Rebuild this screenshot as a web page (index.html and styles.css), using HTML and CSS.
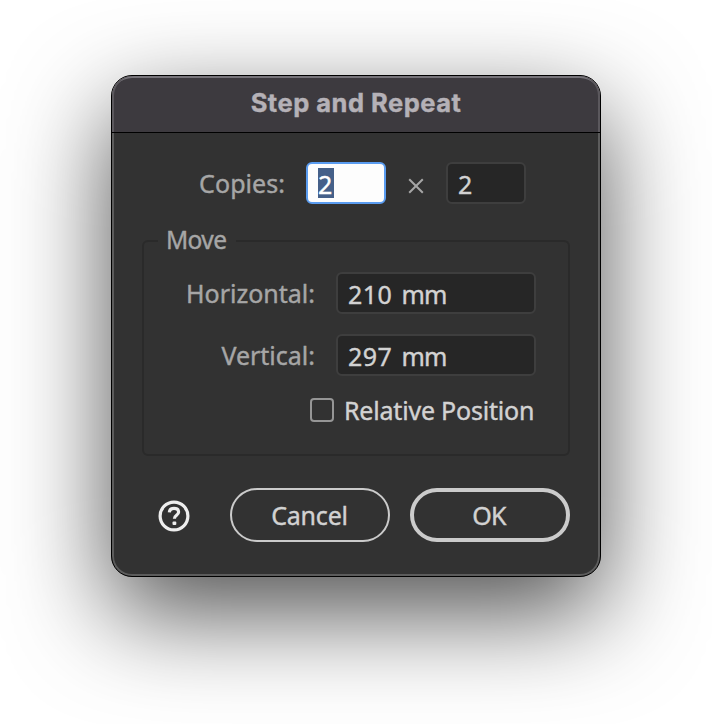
FILE: index.html
```html
<!DOCTYPE html>
<html lang="en">
<head>
<meta charset="utf-8">
<title>Step and Repeat</title>
<link rel="stylesheet" href="styles.css">
</head>
<body>
<main class="dialog">
  <header class="titlebar">Step and Repeat</header>
  <div class="content">
    <div class="copies">
      <span class="label label-copies">Copies:</span>
      <div class="field field-small focused"><span class="selection">2</span></div>
      <svg class="times" viewBox="0 0 16 16"><path d="M1.2 1.2 14.8 14.8M14.8 1.2 1.2 14.8"/></svg>
      <div class="field field-small">2</div>
    </div>
    <fieldset class="group">
      <legend class="legend">Move</legend>
      <div class="row">
        <span class="label label-horizontal">Horizontal:</span>
        <div class="field">210 <span class="unit">mm</span></div>
      </div>
      <div class="row">
        <span class="label label-vertical">Vertical:</span>
        <div class="field">297 <span class="unit">mm</span></div>
      </div>
      <div class="check-row">
        <span class="checkbox"></span>
        <span class="check-label">Relative Position</span>
      </div>
    </fieldset>
    <footer class="actions">
      <svg class="help" viewBox="0 0 32 32">
        <circle cx="16" cy="16" r="13.9"/>
        <path d="M11.3 12.4C11.5 9.7 13.3 8.4 16 8.4c2.8 0 4.6 1.3 4.6 3.7 0 3.3-4.2 3.1-4.2 6.6"/>
        <rect x="14.5" y="21.6" width="3.8" height="3.4" rx="1"/>
      </svg>
      <div class="button cancel">Cancel</div>
      <div class="button primary">OK</div>
    </footer>
  </div>
</main>
</body>
</html>
```

FILE: styles.css
```css
* { box-sizing: border-box; }

body {
  margin: 0;
  height: 724px;
  padding: 75px 0 0 111px;
  overflow: hidden;
  background: #fff;
  font: 25px/40px "Noto Sans", "Open Sans", sans-serif;
  color: #d2d2d2;
  -webkit-text-stroke: .4px;
}

.dialog {
  width: 490px;
  height: 502px;
  border: 1px solid #000;
  border-radius: 21px;
  background: #323232;
  box-shadow: inset 0 0 0 2px #5c5c5c, 0 36px 100px rgba(0, 0, 0, .69);
}

.titlebar {
  height: 57px;
  padding-top: 2px;
  border-bottom: 1px solid #000;
  border-radius: 20px 20px 0 0;
  background: #3d3a3f;
  box-shadow: inset 2px 0 #5b585d, inset -2px 0 #5b585d, inset 0 2px #77747a;
  color: #b5b1b7;
  font: 700 25.5px/50px Inter, sans-serif;
  letter-spacing: .5px;
  text-align: center;
}

.content { padding: 29px 30px 0; }

.copies {
  display: flex;
  align-items: center;
  height: 42px;
}

.label { text-align: right; color: #a6a6a6; }
.label-copies { width: 144px; margin-right: 20px; padding-right: 1px; letter-spacing: .05px; }
.label-horizontal, .label-vertical { padding: 1px 1px 0 0; line-height: 40px; }

.field {
  width: 200px;
  height: 42px;
  padding: 0 0 0 10px;
  border: 2px solid #3e3e3e;
  border-radius: 6px;
  background: #262626;
  letter-spacing: .4px;
  word-spacing: 2.5px;
}

.unit { letter-spacing: -1px; }

.field-small { width: 80px; }
.focused { border-color: #5a9cf0; background: #fdfdfd; }

.selection {
  display: block;
  width: 16px;
  height: 30px;
  margin-top: 4px;
  background: #456089;
  color: #fff;
  line-height: 32px;
}

.times {
  width: 16px;
  height: 16px;
  margin: 6px 22px 0;
  fill: none;
  stroke: #a6a6a6;
  stroke-width: 2;
}

.group {
  position: relative;
  height: 235px;
  margin: 17px 0 0;
  padding: 11px 32px 0 0;
  border: 2px solid #2a2a2a;
  border-radius: 6px;
}

.legend {
  height: 40px;
  margin-left: 14px;
  padding: 0 10px 0 8px;
  color: #a6a6a6;
  font-size: 24.5px;
  letter-spacing: -.6px;
  line-height: 38px;
}

.row {
  display: flex;
  justify-content: flex-end;
  gap: 20px;
  height: 42px;
  margin-bottom: 20px;
}

.check-row {
  display: flex;
  justify-content: flex-end;
  align-items: center;
  gap: 10px;
  height: 28px;
}

.checkbox {
  width: 24px;
  height: 24px;
  border: 2px solid #969696;
  border-radius: 4px;
}

.check-label { width: 192px; letter-spacing: -.2px; white-space: nowrap; }

.actions {
  display: flex;
  align-items: center;
  height: 54px;
  margin-top: 32px;
}

.help { width: 32px; height: 32px; margin: 2px 40px 0 16px; fill: none; stroke: #eee; stroke-width: 3.2; }
.help rect { fill: #eee; stroke: none; }

.button {
  width: 160px;
  height: 54px;
  border: 2px solid #cbcbcb;
  border-radius: 27px;
  text-align: center;
  line-height: 51px;
}

.cancel { margin-right: 20px; padding-right: 1px; letter-spacing: -.2px; }
.primary { padding-right: 2px; border-width: 4px; line-height: 47px; letter-spacing: -.7px; }
```
